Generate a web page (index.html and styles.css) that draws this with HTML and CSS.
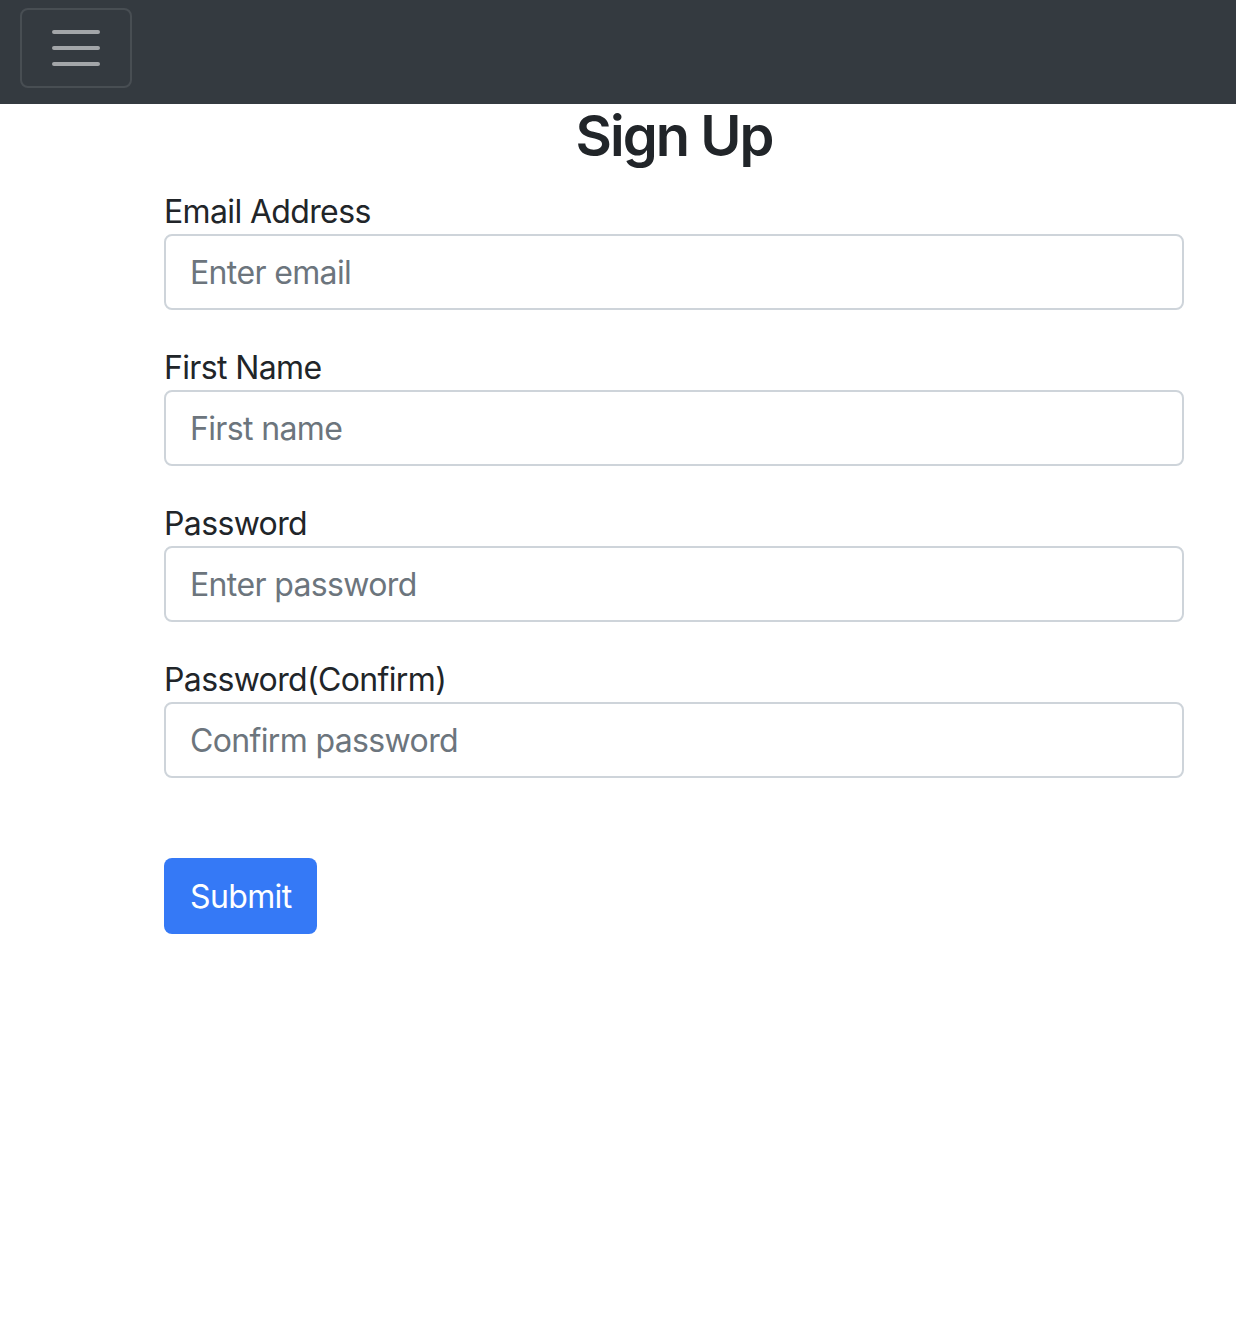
FILE: index.html
```html
<!DOCTYPE html>
<html lang="en">
<head>
<meta charset="utf-8">
<title>Sign Up</title>
<link rel="stylesheet" href="styles.css">
</head>
<body>
<nav class="navbar">
  <button class="toggler" type="button" aria-label="Toggle navigation">
    <svg width="48" height="36" viewBox="0 0 48 36">
      <path d="M2 2H46M2 18H46M2 34H46" stroke="rgba(255,255,255,0.55)" stroke-width="4" stroke-linecap="round"/>
    </svg>
  </button>
</nav>
<main class="container">
  <h2 class="title">Sign Up</h2>
  <form class="form">
    <div class="group">
      <label class="label">Email Address</label>
      <input class="input" type="email" placeholder="Enter email">
    </div>
    <div class="group">
      <label class="label">First Name</label>
      <input class="input" type="text" placeholder="First name">
    </div>
    <div class="group">
      <label class="label">Password</label>
      <input class="input" type="password" placeholder="Enter password">
    </div>
    <div class="group">
      <label class="label">Password(Confirm)</label>
      <input class="input" type="password" placeholder="Confirm password">
    </div>
    <button class="submit" type="submit">Submit</button>
  </form>
</main>
</body>
</html>
```

FILE: styles.css
```css
* { box-sizing: border-box; }
html, body { margin: 0; padding: 0; }
body {
  font-family: Inter, "Noto Sans", sans-serif;
  color: #212529;
  background: #fff;
}
.navbar {
  height: 104px;
  background: #343a40;
  display: flex;
  align-items: flex-start;
  padding: 8px 20px;
}
.toggler {
  width: 112px;
  height: 80px;
  border: 2px solid rgba(255,255,255,0.1);
  border-radius: 8px;
  background: transparent;
  display: flex;
  align-items: center;
  justify-content: center;
  padding: 0;
}
.container {
  margin: 0 52px 0 164px;
}
.title {
  margin: 0 0 18px;
  text-align: center;
  font-size: 56px;
  font-weight: 600;
  line-height: 64px;
  letter-spacing: -0.035em;
}
.group {
  display: flex;
  flex-direction: column;
  margin-bottom: 32px;
}
.label {
  font-size: 32px;
  line-height: 44px;
  padding-top: 4px;
  letter-spacing: -0.02em;
}
.input {
  height: 76px;
  border: 2px solid #ced4da;
  border-radius: 8px;
  padding: 0 24px;
  font-family: inherit;
  font-size: 32px;
  letter-spacing: -0.02em;
  color: #495057;
}
.input::placeholder { color: #6c757d; }
.submit {
  margin-top: 48px;
  height: 76px;
  padding: 0 26px;
  background: #3579f6;
  border: none;
  border-radius: 8px;
  color: #fff;
  font-family: inherit;
  font-size: 32px;
  letter-spacing: -0.02em;
}
```
